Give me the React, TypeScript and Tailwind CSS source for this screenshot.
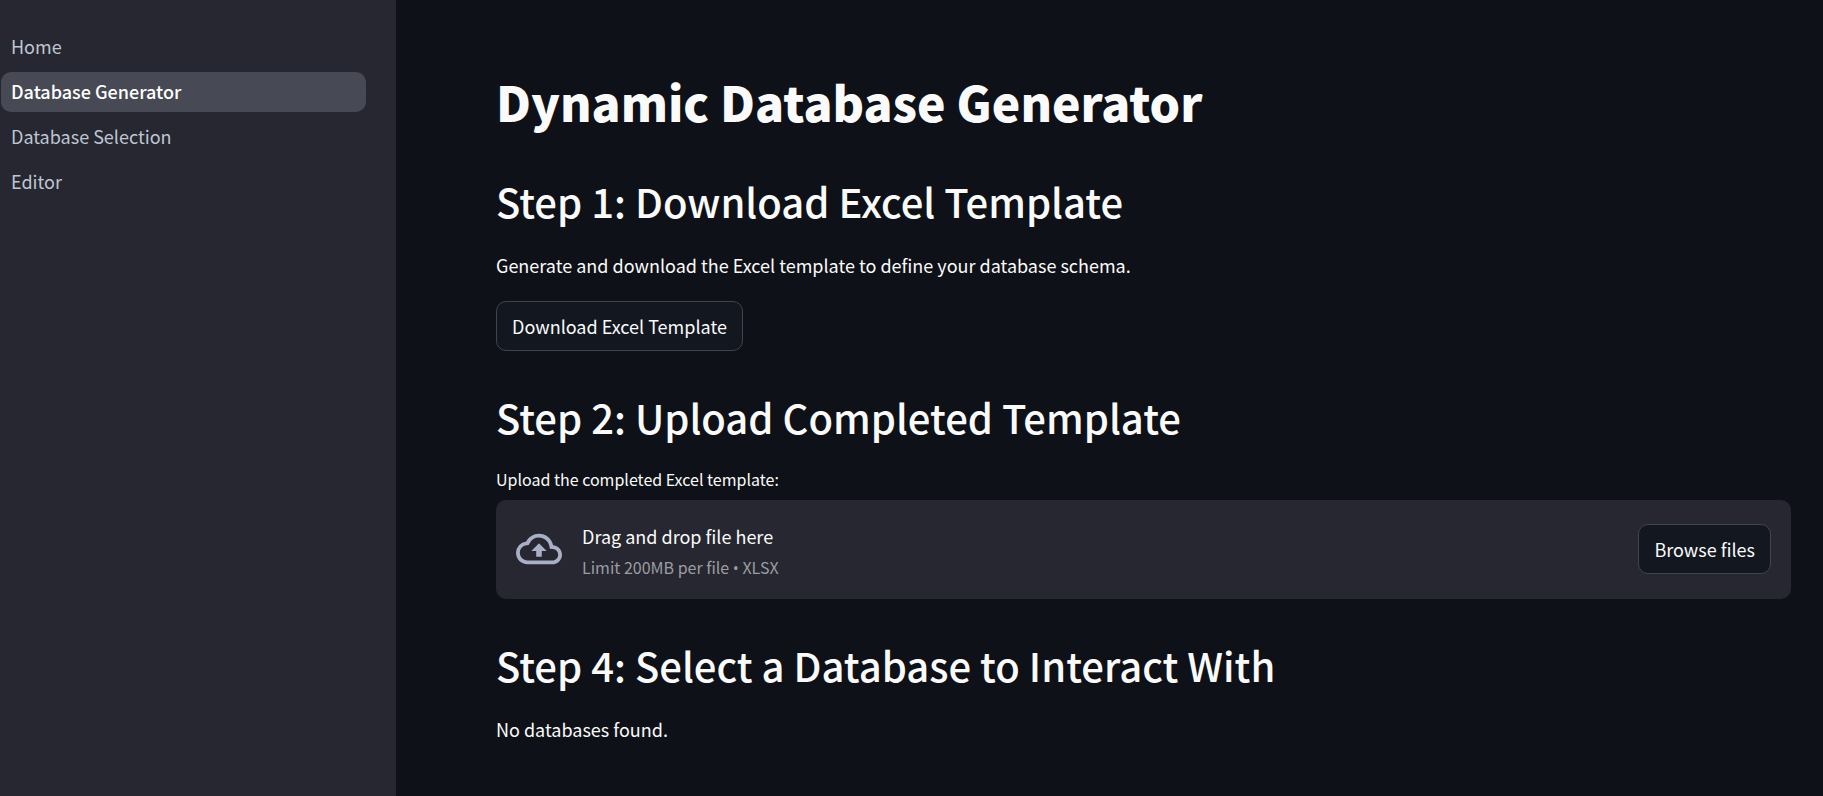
import React from "react";

const pages = ["Home", "Database Generator", "Database Selection", "Editor"];

function StepHeading({ children }: { children: React.ReactNode }) {
  return <h2 className="text-[40px] leading-[68px] font-medium">{children}</h2>;
}

function CloudUploadIcon() {
  return (
    <svg viewBox="0 0 24 24" className="size-[46px] shrink-0 fill-[#a9afc6]" aria-hidden="true">
      <path d="M19.35 10.04A7.49 7.49 0 0 0 12 4C9.11 4 6.6 5.64 5.35 8.04A5.994 5.994 0 0 0 0 14c0 3.31 2.69 6 6 6h13c2.76 0 5-2.24 5-5 0-2.64-2.05-4.78-4.65-4.96zM19 18H6c-2.21 0-4-1.79-4-4 0-2.05 1.53-3.76 3.56-3.97l1.07-.11.5-.95A5.469 5.469 0 0 1 12 6c2.62 0 4.88 1.86 5.39 4.43l.3 1.5 1.53.11A2.98 2.98 0 0 1 22 15c0 1.65-1.35 3-3 3zM8 13h2.55v3h2.9v-3H16l-4-4z" />
    </svg>
  );
}

export default function App() {
  return (
    <div className="flex min-h-screen bg-[#0e1117] font-['Noto_Sans_CJK_SC',sans-serif] text-[#fafafa]">
      <aside className="w-[396px] shrink-0 bg-[#262730] pt-[27px] pr-[30px]">
        <nav aria-label="Pages">
          <ul className="flex flex-col gap-[5px]">
            {pages.map((page) => {
              const active = page === "Database Generator";
              return (
                <li key={page}>
                  <a
                    href="#"
                    aria-current={active ? "page" : undefined}
                    className={
                      active
                        ? "ml-px flex h-10 items-center rounded-[10px] bg-[#474954] px-[10px] pb-[2px] text-[18px] font-medium text-white"
                        : "ml-px flex h-10 items-center rounded-[10px] px-[10px] pb-[2px] text-[18px] text-[#bfc5d3]"
                    }
                  >
                    {page}
                  </a>
                </li>
              );
            })}
          </ul>
        </nav>
      </aside>
      <main className="flex min-w-0 flex-1 flex-col gap-8 pt-[67px] pr-8 pb-8 pl-[100px]">
        <h1 className="text-[48px] leading-[68px] font-black">Dynamic Database Generator</h1>
        <section>
          <StepHeading>Step 1: Download Excel Template</StepHeading>
          <p className="mt-4 text-[18px] leading-7">Generate and download the Excel template to define your database schema.</p>
          <button type="button" className="mt-[22px] block h-[50px] rounded-[10px] border border-[#41444c] bg-[#131720] px-[15px] text-[18px]">
            Download Excel Template
          </button>
        </section>
        <section>
          <StepHeading>Step 2: Upload Completed Template</StepHeading>
          <label htmlFor="template-file" className="mt-4 block text-[16px] leading-6">
            Upload the completed Excel template:
          </label>
          <div className="mt-[9px] flex items-center rounded-[10px] bg-[#262730] px-5 pt-[17px] pb-[18px]">
            <CloudUploadIcon />
            <div className="ml-5 flex min-w-0 flex-1 flex-col gap-[3px] pt-[5px]">
              <div className="text-[18px] leading-7">Drag and drop file here</div>
              <div className="text-[16px] leading-7 text-[#9c9da1]">
                Limit 200MB per file <span className="font-['Open_Sans',sans-serif] leading-none">•</span> XLSX
              </div>
            </div>
            <input id="template-file" type="file" accept=".xlsx" className="hidden" />
            <button
              type="button"
              onClick={() => document.getElementById("template-file")?.click()}
              className="h-[50px] shrink-0 rounded-[10px] border border-[#41444c] bg-[#131720] px-[15px] text-[18px]"
            >
              Browse files
            </button>
          </div>
        </section>
        <section>
          <StepHeading>Step 4: Select a Database to Interact With</StepHeading>
          <p className="mt-4 text-[18px] leading-7">No databases found.</p>
        </section>
      </main>
    </div>
  );
}
